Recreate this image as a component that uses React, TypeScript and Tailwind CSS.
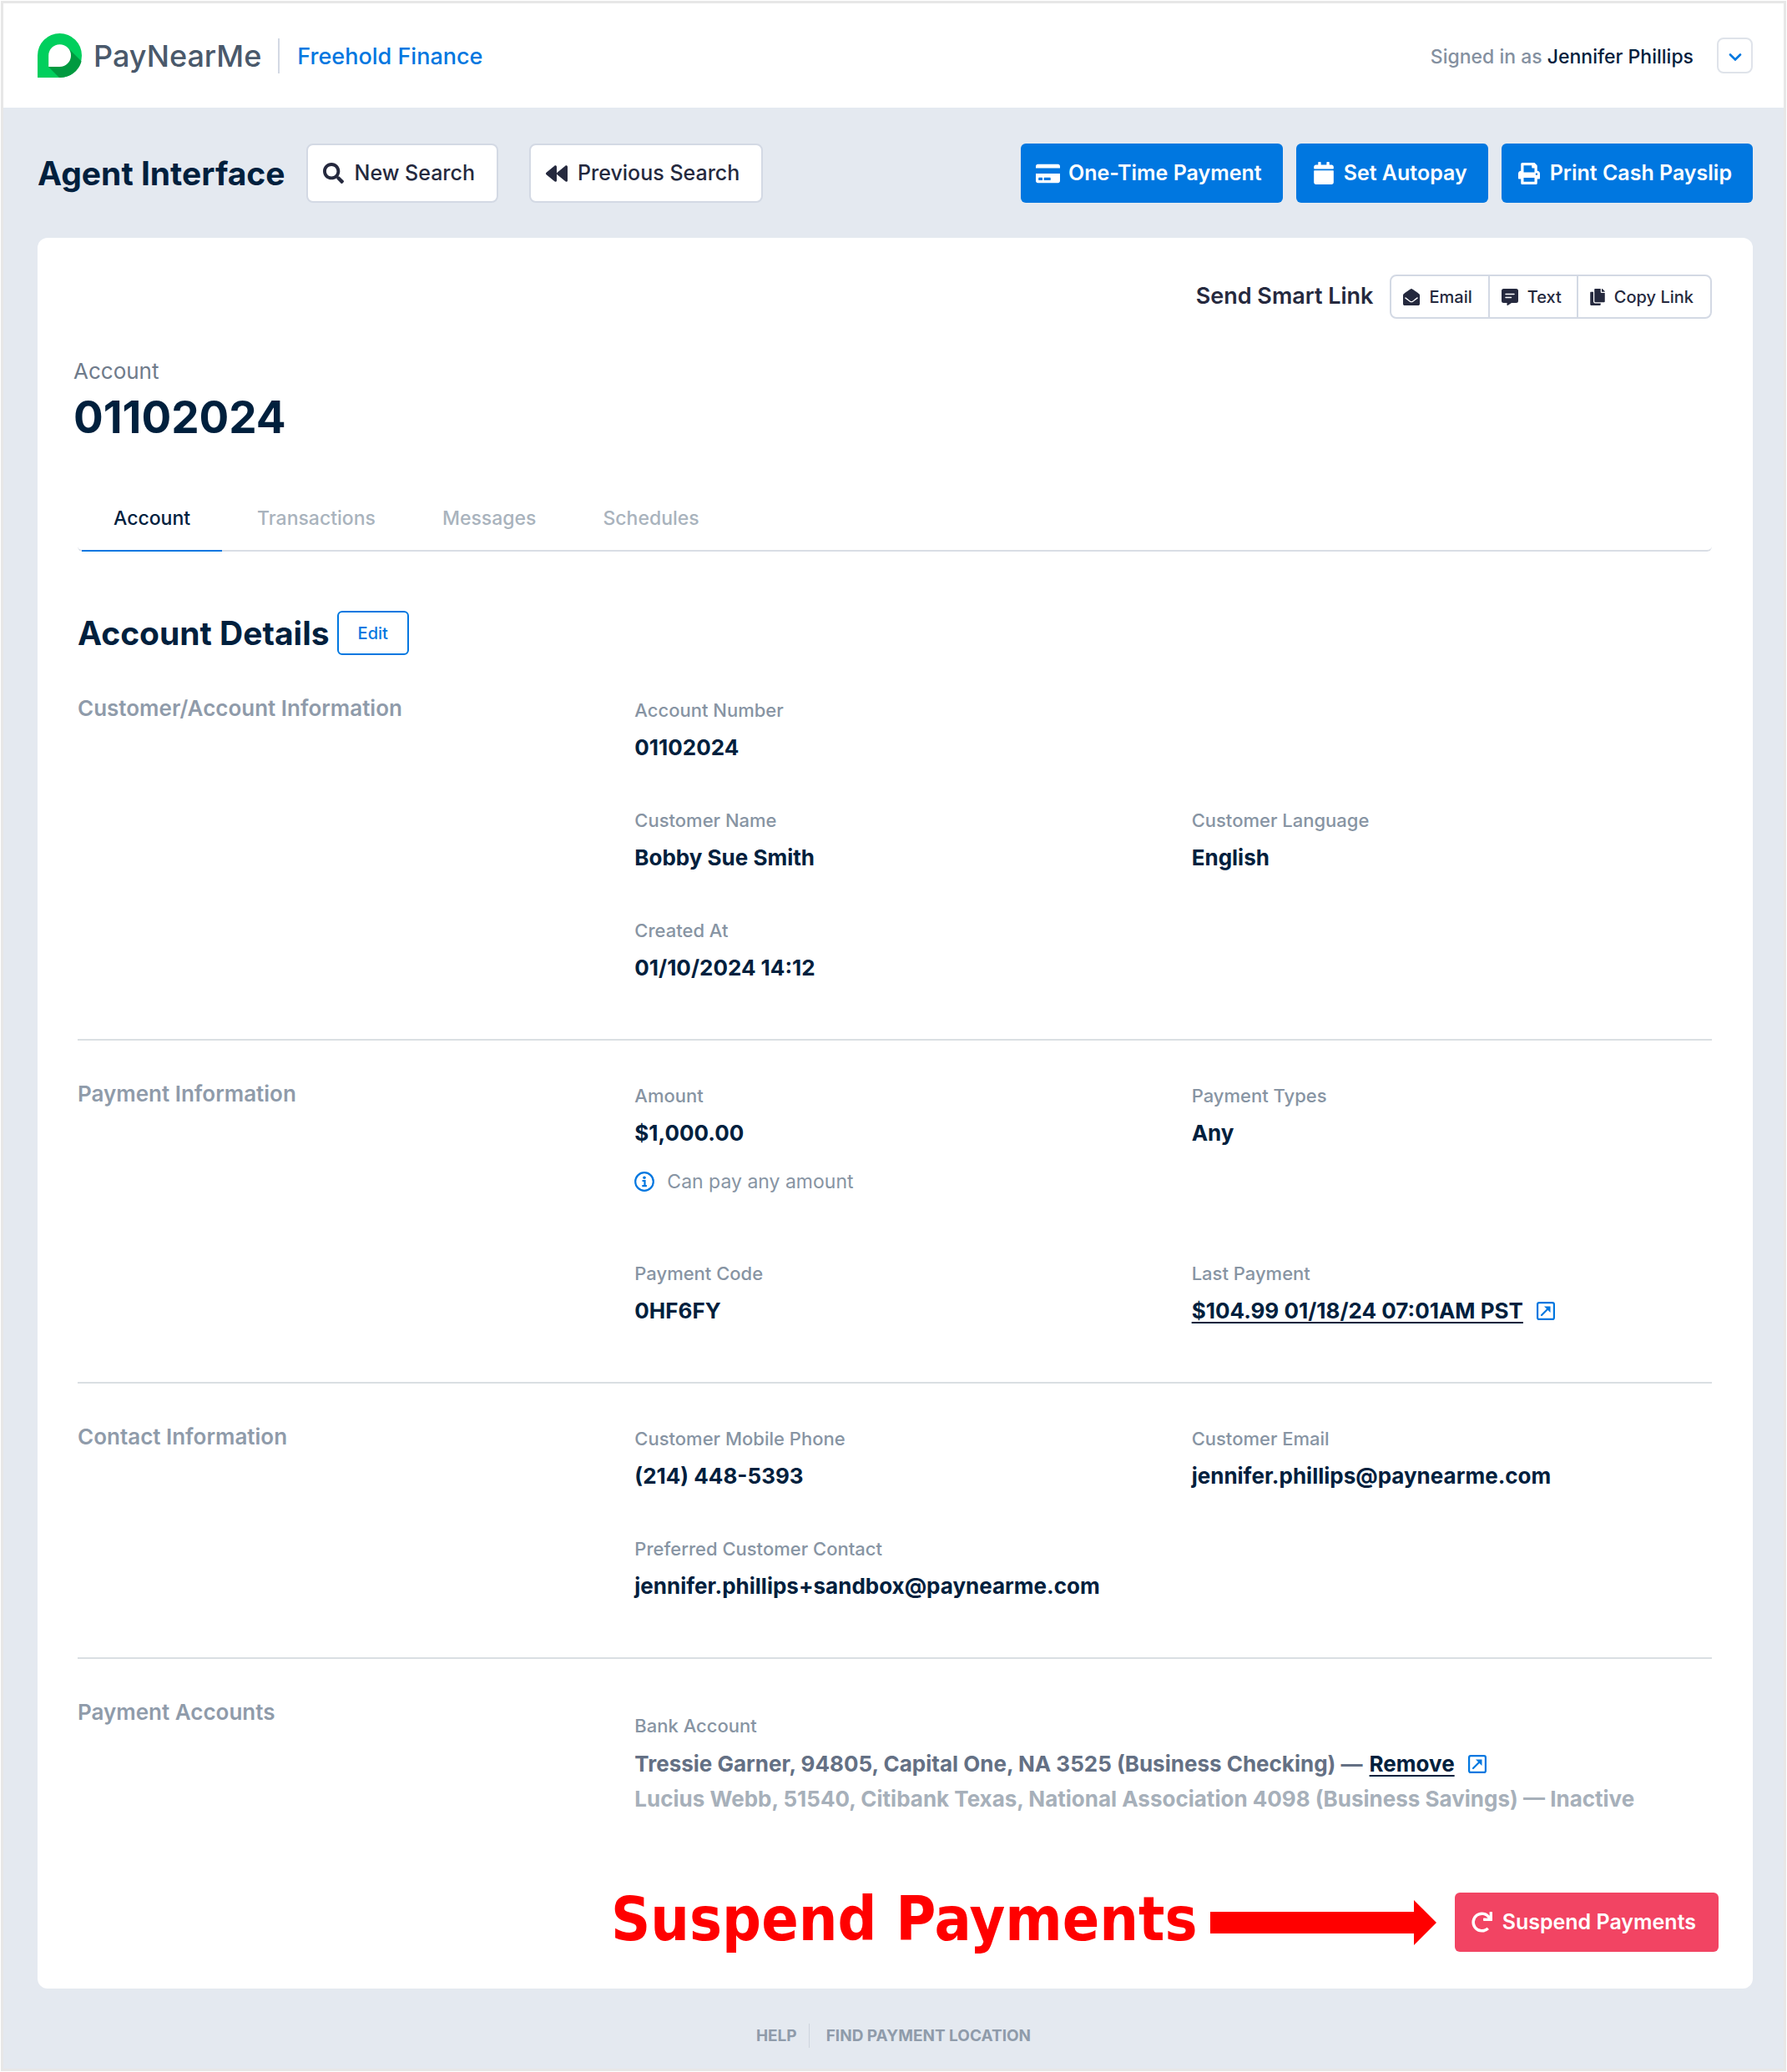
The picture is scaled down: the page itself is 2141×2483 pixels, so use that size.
import { useState } from "react";
import type { ReactNode } from "react";
import {
    FaBackward,
    FaCalendar,
    FaCopy,
    FaCreditCard,
    FaEnvelopeOpen,
    FaPrint,
    FaRedo,
    FaSearch,
} from "react-icons/fa";

const tabs = ["Account", "Transactions", "Messages", "Schedules"];

const Logo = () => (
    <svg viewBox="0 0 53 53" className="h-[53px] w-[53px]" aria-hidden="true">
        <path d="M26.5 0A26.5 26.5 0 0 1 26.5 53H0V26.5A26.5 26.5 0 0 1 26.5 0Z" fill="#00cf5d" />
        <path d="M13 40L26 53h.5A26.5 26.5 0 0 0 52.6 33.5L36 17Z" fill="#009a40" />
        <path d="M26.6 13.2A13.4 13.4 0 0 1 26.6 40H13.2V26.6A13.4 13.4 0 0 1 26.6 13.2Z" fill="#fff" />
    </svg>
);

const TextIcon = () => (
    <svg viewBox="0 0 20 20" className="h-5 w-5" aria-hidden="true">
        <path
            d="M2.5 0h15A2.5 2.5 0 0 1 20 2.5v12a2.5 2.5 0 0 1-2.5 2.5H12l-4.600 3c-.4.2-.9 0-.9-.5V17h-4A2.5 2.5 0 0 1 0 14.5v-12A2.5 2.5 0 0 1 2.5 0Z"
            fill="currentColor"
        />
        <path d="M5 6.5h10M5 10.5h6.5" stroke="#fff" strokeWidth="1.5" strokeLinecap="round" />
    </svg>
);

const InfoIcon = () => (
    <svg viewBox="0 0 24 24" className="h-6 w-6 text-[#0077e0]" fill="none" aria-hidden="true">
        <circle cx="12" cy="12" r="10.8" stroke="currentColor" strokeWidth="2.2" />
        <circle cx="12" cy="7.2" r="1.8" fill="currentColor" />
        <path d="M9.5 11h3v6M9.3 17.2h5.6" stroke="currentColor" strokeWidth="2.2" />
    </svg>
);

const ExternalIcon = () => (
    <svg viewBox="0 0 22 22" className="h-[22px] w-[22px] text-[#0077e0]" fill="none" aria-hidden="true">
        <rect x="1.1" y="1.1" width="19.8" height="19.8" rx="2" stroke="currentColor" strokeWidth="2.2" />
        <path d="M6 16L14 8" stroke="currentColor" strokeWidth="2.2" strokeLinecap="round" />
        <path d="M9 5.5h7.5V13Z" fill="currentColor" />
    </svg>
);

const Field = ({ label, children }: { label: string; children: ReactNode }) => (
    <div>
        <dt className="text-[22px] leading-8 font-medium text-[#8794a3]">{label}</dt>
        <dd className="mt-[9px] text-[26px] leading-10 font-bold text-[#00203d]">{children}</dd>
    </div>
);

const Section = ({ title, children }: { title: string; children: ReactNode }) => (
    <section className="grid grid-cols-3 gap-x-11 border-b-2 border-[#dadfe3] pt-12 pb-[65px]">
        <h3 className="text-[26px] leading-8 font-semibold text-[#8f9baa]">{title}</h3>
        <dl className="col-span-2 grid grid-cols-2 gap-x-11 gap-y-[51px] pt-0.5">{children}</dl>
    </section>
);

const primaryButton =
    "flex h-[71px] items-center rounded-md bg-[#0077e0] pr-[25px] text-[25px] font-semibold text-white";
const outlineButton =
    "flex h-[71px] items-center gap-3 rounded-lg border-2 border-[#d3d9e4] bg-white pr-[26px] pl-[18px] text-[25px] font-medium text-[#25293e]";
const linkButton = "flex items-center gap-[11px] pl-[14px] text-xl font-medium text-[#25293e]";

export default function App() {
    const [activeTab, setActiveTab] = useState("Account");

    return (
        <div className="min-h-screen bg-white p-px font-['Inter',sans-serif]">
            <div className="border-[3px] border-[#e7e7e7] bg-[#e4e9f0]">
                <header className="flex h-[125px] items-center justify-between bg-white pr-[37px] pl-[41px]">
                    <div className="flex items-center">
                        <Logo />
                        <span className="ml-[14px] text-[36px] leading-none font-medium text-[#4a596b]">PayNearMe</span>
                        <span className="ml-5 h-[42px] w-0.5 bg-[#d3d9e4]" />
                        <a href="#" className="ml-[21px] pt-1 text-[27px] font-medium text-[#0077e0]">
                            Freehold Finance
                        </a>
                    </div>
                    <div className="flex items-center text-[23px]">
                        <p className="pt-1 font-medium text-[#00203d]">
                            <span className="text-[#8490a0]">Signed in as</span> Jennifer Phillips
                        </p>
                        <button
                            type="button"
                            aria-label="Account menu"
                            className="ml-7 flex h-[43px] w-[43px] items-center justify-center rounded-lg border-2 border-[#dfe3ea]"
                        >
                            <svg viewBox="0 0 16 10" className="mt-1 h-[10px] w-4 text-[#0077e0]" fill="none">
                                <path d="M2 1.5L8 7.5L14 1.5" stroke="currentColor" strokeWidth="2.6" strokeLinecap="round" />
                            </svg>
                        </button>
                    </div>
                </header>

                <main className="pr-[37px] pl-[41px]">
                    <div className="flex items-center justify-between pt-[43px] pb-[42px]">
                        <div className="flex items-center">
                            <h1 className="text-[39px] leading-none font-bold text-[#00203d]">Agent Interface</h1>
                            <button type="button" className={`${outlineButton} ml-[26px]`}>
                                <FaSearch className="h-[25px] w-[25px]" />
                                New Search
                            </button>
                            <button type="button" className={`${outlineButton} ml-[37px]`}>
                                <FaBackward className="h-[26px] w-[26px]" />
                                Previous Search
                            </button>
                        </div>
                        <div className="flex items-center gap-4">
                            <button type="button" className={`${primaryButton} gap-[10px] pl-[18px]`}>
                                <FaCreditCard className="h-[26px] w-[29px]" />
                                One-Time Payment
                            </button>
                            <button type="button" className={`${primaryButton} gap-3 pl-[21px]`}>
                                <FaCalendar className="h-[27px] w-6" />
                                Set Autopay
                            </button>
                            <button type="button" className={`${primaryButton} gap-3 pl-5`}>
                                <FaPrint className="h-[26px] w-[26px]" />
                                Print Cash Payslip
                            </button>
                        </div>
                    </div>

                    <div className="rounded-xl bg-white pt-11 pr-[49px] pb-11 pl-12">
                        <div className="flex items-center justify-end gap-5">
                            <p className="text-[27px] font-semibold text-[#25293e]">Send Smart Link</p>
                            <div className="flex h-[53px] divide-x-2 divide-[#d3d9e4] rounded-lg border-2 border-[#d3d9e4]">
                                <button type="button" className={`${linkButton} pr-[19px]`}>
                                    <FaEnvelopeOpen className="h-5 w-5" />
                                    Email
                                </button>
                                <button type="button" className={`${linkButton} pr-[18px]`}>
                                    <TextIcon />
                                    Text
                                </button>
                                <button type="button" className={`${linkButton} pr-5`}>
                                    <FaCopy className="h-5 w-[18px]" />
                                    Copy Link
                                </button>
                            </div>
                        </div>

                        <div className="-ml-[5px] mt-[45px]">
                            <p className="text-[26px] leading-9 text-[#6f7b8b]">Account</p>
                            <p className="text-[53px] leading-[74px] font-bold text-[#00203d]">01102024</p>
                        </div>

                        <div role="tablist" className="mt-[47px] flex gap-1 rounded-md border-b-2 border-[#d9dee5] pl-[5px]">
                            {tabs.map((tab) => (
                                <button
                                    key={tab}
                                    type="button"
                                    role="tab"
                                    aria-selected={activeTab === tab}
                                    onClick={() => setActiveTab(tab)}
                                    className={`-mb-0.5 h-[77px] border-b-2 px-[38px] text-[23px] font-medium ${
                                        activeTab === tab
                                            ? "border-[#0077e0] text-[#00203d]"
                                            : "border-transparent text-[#a9b3bd]"
                                    }`}
                                >
                                    {tab}
                                </button>
                            ))}
                        </div>

                        <div className="mt-[71px] flex h-[53px] items-center gap-[9px]">
                            <h2 className="text-[39px] leading-none font-bold text-[#00203d]">Account Details</h2>
                            <button
                                type="button"
                                className="h-[53px] rounded-md border-2 border-[#0077e0] px-[23px] text-xl font-medium text-[#0077e0]"
                            >
                                Edit
                            </button>
                        </div>

                        <Section title="Customer/Account Information">
                            <div className="col-span-2">
                                <Field label="Account Number">01102024</Field>
                            </div>
                            <Field label="Customer Name">Bobby Sue Smith</Field>
                            <Field label="Customer Language">English</Field>
                            <Field label="Created At">01/10/2024 14:12</Field>
                        </Section>

                        <Section title="Payment Information">
                            <div className="pb-[27px]">
                                <Field label="Amount">$1,000.00</Field>
                                <p className="mt-[22px] flex items-center gap-[15px] text-[23px] leading-8 text-[#8794a3]">
                                    <InfoIcon />
                                    Can pay any amount
                                </p>
                            </div>
                            <Field label="Payment Types">Any</Field>
                            <Field label="Payment Code">0HF6FY</Field>
                            <Field label="Last Payment">
                                <span className="flex items-center gap-4">
                                    <a href="#" className="underline decoration-2 underline-offset-4">
                                        $104.99 01/18/24 07:01AM PST
                                    </a>
                                    <ExternalIcon />
                                </span>
                            </Field>
                        </Section>

                        <Section title="Contact Information">
                            <Field label="Customer Mobile Phone">(214) 448-5393</Field>
                            <Field label="Customer Email">jennifer.phillips@paynearme.com</Field>
                            <Field label="Preferred Customer Contact">jennifer.phillips+sandbox@paynearme.com</Field>
                        </Section>

                        <section className="grid grid-cols-3 gap-x-11 pt-12">
                            <h3 className="text-[26px] leading-8 font-semibold text-[#8f9baa]">Payment Accounts</h3>
                            <div className="col-span-2 pt-4 text-[26px] leading-[42px] font-bold">
                                <h4 className="text-[22px] leading-8 font-medium text-[#8794a3]">Bank Account</h4>
                                <div className="mt-[9px] flex items-center text-[#647084]">
                                    Tressie Garner, 94805, Capital One, NA 3525 (Business Checking) —
                                    <a href="#" className="ml-2 text-[#00203d] underline decoration-2 underline-offset-4">
                                        Remove
                                    </a>
                                    <span className="ml-4">
                                        <ExternalIcon />
                                    </span>
                                </div>
                                <p className="text-[#a7b0ba]">
                                    Lucius Webb, 51540, Citibank Texas, National Association 4098 (Business Savings) — Inactive
                                </p>
                            </div>
                        </section>

                        <div className="-mr-2 mt-[91px] flex items-center justify-end">
                            <p className="pb-2 font-['DejaVu_Sans_Condensed','DejaVu_Sans',sans-serif] text-[73px] leading-[60px] font-bold text-[#ff0000]">
                                Suspend Payments
                            </p>
                            <svg viewBox="0 0 271 54" className="ml-[15px] h-[54px] w-[271px]" aria-hidden="true">
                                <path d="M0 14H244V0L271 27L244 54V40H0Z" fill="#ff0000" />
                            </svg>
                            <button
                                type="button"
                                className="ml-[22px] flex h-[71px] items-center gap-3 rounded-md bg-[#f24463] pr-[27px] pl-5 text-[25px] font-semibold text-white"
                            >
                                <FaRedo className="h-[25px] w-[25px]" />
                                Suspend Payments
                            </button>
                        </div>
                    </div>
                </main>

                <footer className="flex items-center justify-center pt-[42px] pb-[25px] text-[19px] font-bold text-[#8f9baa]">
                    <a href="#" className="border-r border-[#cdd4dd] pr-[14px] leading-[29px]">
                        HELP
                    </a>
                    <a href="#" className="pl-5 leading-[29px]">
                        FIND PAYMENT LOCATION
                    </a>
                </footer>
            </div>
        </div>
    );
}
